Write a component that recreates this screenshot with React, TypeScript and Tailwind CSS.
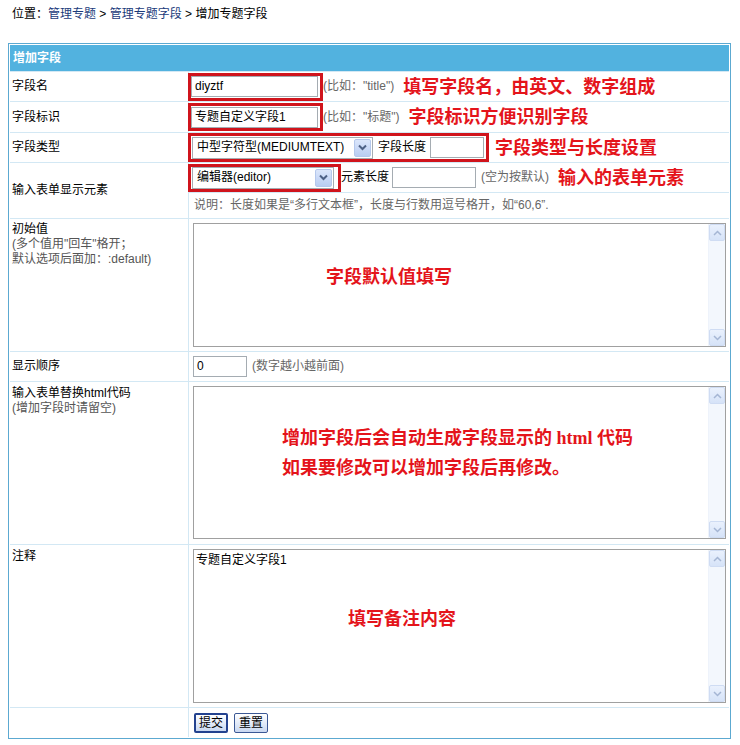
import React from "react";

const ANN =
  "font-['Liberation_Serif','Noto_Sans_CJK_SC',serif] font-bold text-[18px] leading-[22px] text-[#e4141b] whitespace-nowrap";

function TextInput({ value = "", w }: { value?: string; w: string }) {
  return (
    <div
      className={`${w} h-[21px] border border-[#a5acb2] bg-white flex items-center px-[3px] text-[12px] leading-[15px] text-black whitespace-nowrap overflow-hidden`}
    >
      {value}
    </div>
  );
}

function Select({ value, w }: { value: string; w: string }) {
  return (
    <div
      className={`${w} h-[22px] border border-[#a5acb2] bg-white flex items-center justify-between pl-[4px] pr-[1px] text-[12px]`}
    >
      <span className="whitespace-nowrap">{value}</span>
      <span className="w-[17px] h-[18px] rounded-[2px] border border-[#b5c8ec] bg-gradient-to-b from-[#dbe6fb] to-[#b9cdf2] flex items-center justify-center">
        <svg width="9" height="7" viewBox="0 0 9 7">
          <path d="M1 1.5 L4.5 5 L8 1.5" fill="none" stroke="#4d6185" strokeWidth="2" />
        </svg>
      </span>
    </div>
  );
}

function ScrollBtn({ up }: { up?: boolean }) {
  return (
    <div className="w-[16px] h-[17px] rounded-[2px] border border-[#cfdcf3] bg-gradient-to-b from-[#eaf1fd] to-[#d6e3f8] flex items-center justify-center">
      <svg width="9" height="6" viewBox="0 0 9 6">
        <path
          d={up ? "M1 5 L4.5 1.5 L8 5" : "M1 1 L4.5 4.5 L8 1"}
          fill="none"
          stroke="#a5b6d4"
          strokeWidth="1.5"
        />
      </svg>
    </div>
  );
}

function FakeTextarea({ h, children }: { h: string; children?: React.ReactNode }) {
  return (
    <div className={`${h} w-full border border-[#a0a0a0] bg-white flex`}>
      <div className="relative flex-1 min-w-0">{children}</div>
      <div className="w-[17px] shrink-0 bg-[#f3f7fd] border-l border-[#eef3fb] flex flex-col justify-between">
        <ScrollBtn up />
        <ScrollBtn />
      </div>
    </div>
  );
}

const ROW = "flex border-t border-[#d3e8f4]";
const LEFT = "w-[179px] shrink-0 border-r border-[#d3e8f4] pl-[2px]";
const HINT = "text-[#666] whitespace-nowrap";

export default function App() {
  return (
    <div className="w-[740px] h-[745px] bg-white font-['Liberation_Sans','Noto_Sans_CJK_SC',sans-serif] text-[12px] leading-[15px] text-black">
      <div className="h-[43px] pt-[6px] pl-[12px] leading-[16px] whitespace-nowrap">
        位置：<span className="text-[#1b3b7b]">管理专题</span>&nbsp;&gt;&nbsp;
        <span className="text-[#1b3b7b]">管理专题字段</span>&nbsp;&gt;&nbsp;增加专题字段
      </div>

      <div className="ml-[8px] w-[723px] border border-[#5ca9d1] p-[1px]">
        <div className="h-[26px] bg-[#52b2df] flex items-center pl-[3px] font-bold text-white">增加字段</div>

        {/* row 1 */}
        <div className={`${ROW} h-[30px]`}>
          <div className={`${LEFT} flex items-center`}>字段名</div>
          <div className="flex items-center">
            <div className="ml-[-1px] h-[28px] border-[3px] border-[#d0141c] flex items-center pr-[2px]">
              <TextInput value="diyztf" w="w-[127px]" />
            </div>
            <span className={HINT}>(比如："title")</span>
            <span className={`${ANN} ml-[9px]`}>填写字段名，由英文、数字组成</span>
          </div>
        </div>

        {/* row 2 */}
        <div className={`${ROW} h-[31px]`}>
          <div className={`${LEFT} flex items-center`}>字段标识</div>
          <div className="flex items-center">
            <div className="ml-[-1px] h-[28px] border-[3px] border-[#d0141c] flex items-center pr-[2px]">
              <TextInput value="专题自定义字段1" w="w-[127px]" />
            </div>
            <span className={HINT}>(比如："标题")</span>
            <span className={`${ANN} ml-[9px]`}>字段标识方便识别字段</span>
          </div>
        </div>

        {/* row 3 */}
        <div className={`${ROW} h-[30px]`}>
          <div className={`${LEFT} flex items-center`}>字段类型</div>
          <div className="flex items-center">
            <div className="ml-[-1px] h-[29px] w-[301px] border-[3px] border-[#d0141c] flex items-center pl-[1px]">
              <Select value="中型字符型(MEDIUMTEXT)" w="w-[181px]" />
              <span className="ml-[5px] whitespace-nowrap">字段长度</span>
              <div className="ml-[4px]">
                <TextInput w="w-[54px]" />
              </div>
            </div>
            <span className={`${ANN} ml-[6px]`}>字段类型与长度设置</span>
          </div>
        </div>

        {/* row 4 */}
        <div className={`${ROW} h-[56px]`}>
          <div className={`${LEFT} flex items-center`}>输入表单显示元素</div>
          <div className="flex-1 flex flex-col">
            <div className="h-[30px] border-b border-[#d3e8f4] flex items-center">
              <div className="ml-[-1px] h-[28px] w-[153px] border-[3px] border-[#d0141c] flex items-center pl-[1px]">
                <Select value="编辑器(editor)" w="w-[142px]" />
              </div>
              <span className="whitespace-nowrap">元素长度</span>
              <div className="ml-[3px]">
                <TextInput w="w-[84px]" />
              </div>
              <span className={`${HINT} ml-[5px]`}>(空为按默认)</span>
              <span className={`${ANN} ml-[9px]`}>输入的表单元素</span>
            </div>
            <div className="flex-1 flex items-center pl-[5px]">
              <span className={HINT}>说明：长度如果是“多行文本框”，长度与行数用逗号格开，如“60,6”.</span>
            </div>
          </div>
        </div>

        {/* row 5 */}
        <div className={`${ROW} h-[133px]`}>
          <div className={`${LEFT} pt-[3px]`}>
            <div>初始值</div>
            <div className="text-[#555]">(多个值用"回车"格开；</div>
            <div className="text-[#555]">默认选项后面加：:default)</div>
          </div>
          <div className="flex-1 pt-[4px] pl-[4px] pr-[3px]">
            <FakeTextarea h="h-[124px]">
              <div className={`${ANN} absolute left-[132px] top-[42px]`}>字段默认值填写</div>
            </FakeTextarea>
          </div>
        </div>

        {/* row 6 */}
        <div className={`${ROW} h-[30px]`}>
          <div className={`${LEFT} flex items-center`}>显示顺序</div>
          <div className="flex items-center pl-[4px]">
            <TextInput value="0" w="w-[54px]" />
            <span className={`${HINT} ml-[5px]`}>(数字越小越前面)</span>
          </div>
        </div>

        {/* row 7 */}
        <div className={`${ROW} h-[163px]`}>
          <div className={`${LEFT} pt-[4px]`}>
            <div>输入表单替换html代码</div>
            <div className="text-[#555]">(增加字段时请留空)</div>
          </div>
          <div className="flex-1 pt-[4px] pl-[4px] pr-[3px]">
            <FakeTextarea h="h-[153px]">
              <div className={`${ANN} absolute left-[88px] top-[40px]`}>
                <div>增加字段后会自动生成字段显示的 html 代码</div>
                <div className="mt-[8px]">如果要修改可以增加字段后再修改。</div>
              </div>
            </FakeTextarea>
          </div>
        </div>

        {/* row 8 */}
        <div className={`${ROW} h-[163px]`}>
          <div className={`${LEFT} pt-[4px]`}>注释</div>
          <div className="flex-1 pt-[4px] pl-[4px] pr-[3px]">
            <FakeTextarea h="h-[154px]">
              <div className="absolute left-[2px] top-[3px] whitespace-nowrap">专题自定义字段1</div>
              <div className={`${ANN} absolute left-[154px] top-[58px]`}>填写备注内容</div>
            </FakeTextarea>
          </div>
        </div>

        {/* row 9 */}
        <div className={`${ROW} h-[30px]`}>
          <div className={LEFT}></div>
          <div className="flex items-center pl-[5px] gap-[6px]">
            <button className="h-[20px] w-[34px] rounded-[2px] border-2 border-[#23428f] bg-gradient-to-b from-white to-[#c9d8f1] text-[12px] leading-[14px] flex items-center justify-center">
              提交
            </button>
            <button className="h-[20px] w-[34px] rounded-[2px] border border-[#3b5895] bg-gradient-to-b from-white to-[#c9d8f1] text-[12px] leading-[14px] flex items-center justify-center">
              重置
            </button>
          </div>
        </div>
      </div>
    </div>
  );
}
